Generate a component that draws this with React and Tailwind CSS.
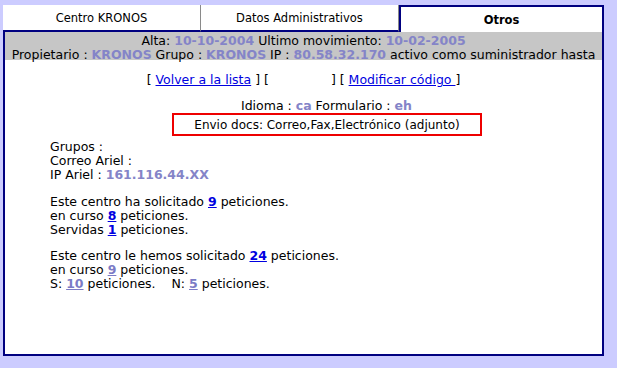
import React from 'react';

const Val = ({ children }) => <b className="text-[#8484c8]">{children}</b>;
const Num = ({ children, visited }) => (
  <a href="#" className={`font-bold underline ${visited ? 'text-[#7b7bc6]' : 'text-[#0000e0]'}`}>
    {children}
  </a>
);

const App = () => {
  return (
    <div className="w-[617px] h-[368px] bg-[#ccccff] pl-[3px] pt-[5px] text-[12.5px] leading-[14px] text-black font-['DejaVu_Sans',sans-serif]">
      <div className="w-[601px]">
        {/* tabs */}
        <div className="flex h-[27px] text-[11.5px]">
          <div className="w-[197px] bg-white border-b-2 border-[#000080] flex items-center justify-center">
            Centro KRONOS
          </div>
          <div className="w-[199px] bg-white border-b-2 border-l border-l-[#8a8a8a] border-r border-r-[#8a8a8a] border-[#000080] flex items-center justify-center">
            Datos Administrativos
          </div>
          <div className="flex-1 bg-white border-t-2 border-x-2 border-[#000080] flex items-center justify-center font-bold">
            Otros
          </div>
        </div>

        {/* body */}
        <div className="h-[324px] bg-white border-x-2 border-b-2 border-[#000080]">
          <div className="h-[28px] bg-[#c6c6c6] pt-[2px] text-center leading-[13.5px] whitespace-nowrap">
            <div>
              Alta: <Val>10-10-2004</Val> Ultimo movimiento: <Val>10-02-2005</Val>
            </div>
            <div>
              Propietario : <Val>KRONOS</Val> Grupo : <Val>KRONOS</Val> IP : <Val>80.58.32.170</Val> activo como suministrador hasta
            </div>
          </div>

          <div className="mt-[13px] text-center">
            [ <a href="#" className="text-[#0000e0] underline">Volver a la lista</a> ] [
            <span className="inline-block w-[62px]"></span>
            ] [ <a href="#" className="text-[#0000e0] underline">Modificar código </a> ]
          </div>

          <div className="mt-[12px] pl-[236px]">
            Idioma : <Val>ca</Val> Formulario : <Val>eh</Val>
          </div>
          <div className="ml-[167px] w-[310px] h-[23px] border-2 border-[#ee0000] flex items-center justify-center text-[12px]">
            Envio docs: Correo,Fax,Electrónico (adjunto)
          </div>

          <div className="pl-[45px] mt-[4px]">
            <div>Grupos :</div>
            <div>Correo Ariel :</div>
            <div>
              IP Ariel : <Val>161.116.44.XX</Val>
            </div>

            <div className="mt-[13px]">
              Este centro ha solicitado <Num>9</Num> peticiones.
            </div>
            <div>
              en curso <Num>8</Num> peticiones.
            </div>
            <div>
              Servidas <Num>1</Num> peticiones.
            </div>

            <div className="mt-[12px]">
              Este centro le hemos solicitado <Num>24</Num> peticiones.
            </div>
            <div>
              en curso <Num visited>9</Num> peticiones.
            </div>
            <div>
              S: <Num visited>10</Num> peticiones.&nbsp;&nbsp;&nbsp; N: <Num visited>5</Num> peticiones.
            </div>
          </div>
        </div>
      </div>
    </div>
  );
};

export default App;
